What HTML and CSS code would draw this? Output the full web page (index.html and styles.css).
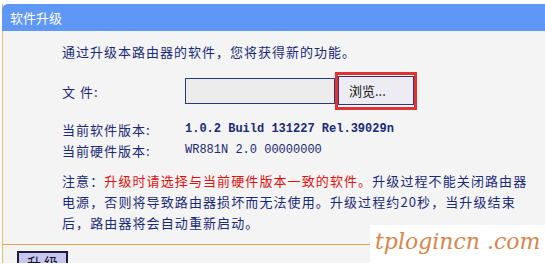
FILE: index.html
```html
<!DOCTYPE html>
<html lang="zh-CN">
<head>
    <meta charset="UTF-8">
    <meta name="viewport" content="width=device-width, initial-scale=1.0">
    <title>软件升级</title>
    <link rel="stylesheet" href="styles.css">
</head>
<body>
    <div class="panel">
        <div class="panel-title">软件升级</div>

        <div class="panel-body">
            <p class="intro">通过升级本路由器的软件，您将获得新的功能。</p>

            <div class="row file-row">
                <span class="label">文&nbsp;件:</span>
                <input type="text" class="file-input" readonly>
                <span class="highlight">
                    <button type="button" class="browse-btn">浏览...</button>
                </span>
            </div>

            <div class="versions">
                <div class="row info-row">
                    <span class="label">当前软件版本:</span>
                    <span class="value">1.0.2 Build 131227 Rel.39029n</span>
                </div>
                <div class="row info-row">
                    <span class="label">当前硬件版本:</span>
                    <span class="value value-small">WR881N 2.0 00000000</span>
                </div>
            </div>

            <p class="notice">
                注意：<span class="warn">升级时请选择与当前硬件版本一致的软件。</span>升级过程不能关闭路由器<br>
                电源，否则将导致路由器损坏而无法使用。升级过程约20秒，当升级结束<br>
                后，路由器将会自动重新启动。
            </p>
        </div>

        <div class="panel-footer">
            <button type="button" class="upgrade-btn">升&nbsp;级</button>
        </div>
    </div>

    <div class="watermark">tplogincn .com</div>
</body>
</html>
```

FILE: styles.css
```css
* {
    margin: 0;
    padding: 0;
    box-sizing: border-box;
}

body {
    font-family: "Noto Sans CJK SC", "Noto Sans", sans-serif;
    font-size: 13px;
    color: #1a2a78;
    background: #ffffff;
    width: 545px;
    height: 264px;
    padding: 4px 0 0 2px;
    overflow: hidden;
    position: relative;
}

.panel {
    background: #f4f4f4;
    border-left: 1px solid #e8bc6a;
}

.panel-title {
    height: 27px;
    line-height: 27px;
    padding-left: 8px;
    background: #5f97f6;
    color: #ffffff;
    font-size: 13px;
    border-top-left-radius: 6px;
    margin-left: -1px;
}

.panel-body {
    padding: 11px 0 11px 59px;
    border-bottom: 1px solid #e8a24a;
}

.intro {
    line-height: 20px;
    letter-spacing: 1px;
}

.row {
    display: flex;
    align-items: center;
}

.label {
    width: 123px;
    flex-shrink: 0;
    letter-spacing: 1px;
}

.file-row {
    margin-top: 10px;
    height: 38px;
}

.file-input {
    width: 150px;
    height: 26px;
    border: 1px solid #283a70;
    background: #ececec;
}

.highlight {
    display: inline-block;
    border: 3px solid #e03434;
    padding: 1px 0 2px;
    width: 82px;
}

.browse-btn {
    display: block;
    width: 76px;
    height: 29px;
    border: 1px solid #3a3070;
    background: #ececf2;
    font-family: "Noto Sans CJK SC", sans-serif;
    font-size: 13px;
    color: #111111;
    padding-left: 10px;
    text-align: left;
}

.versions {
    margin-top: 9px;
}

.info-row {
    height: 21px;
    line-height: 21px;
}

.value {
    font-family: "Liberation Mono", "DejaVu Sans Mono", monospace;
    font-size: 12px;
    font-weight: bold;
    color: #1a2a78;
}

.value-small {
    font-weight: normal;
}

.notice {
    margin-top: 9px;
    line-height: 21px;
    letter-spacing: 1.1px;
}

.warn {
    color: #e01010;
}

.panel-footer {
    height: 18px;
    padding: 6px 0 0 14px;
    overflow: hidden;
}

.upgrade-btn {
    display: block;
    width: 51px;
    height: 22px;
    border: 2px solid #1e1e3a;
    background: #c6c6ee;
    font-family: "Noto Sans CJK SC", sans-serif;
    font-size: 14px;
    color: #111133;
    line-height: 16px;
}

.watermark {
    position: absolute;
    right: 0;
    bottom: 0;
    width: 175px;
    height: 39px;
    background: #ffffff;
    color: #d9844a;
    font-family: "DejaVu Serif", serif;
    font-style: italic;
    font-size: 22px;
    line-height: 34px;
    padding-left: 5px;
    white-space: nowrap;
}
```
